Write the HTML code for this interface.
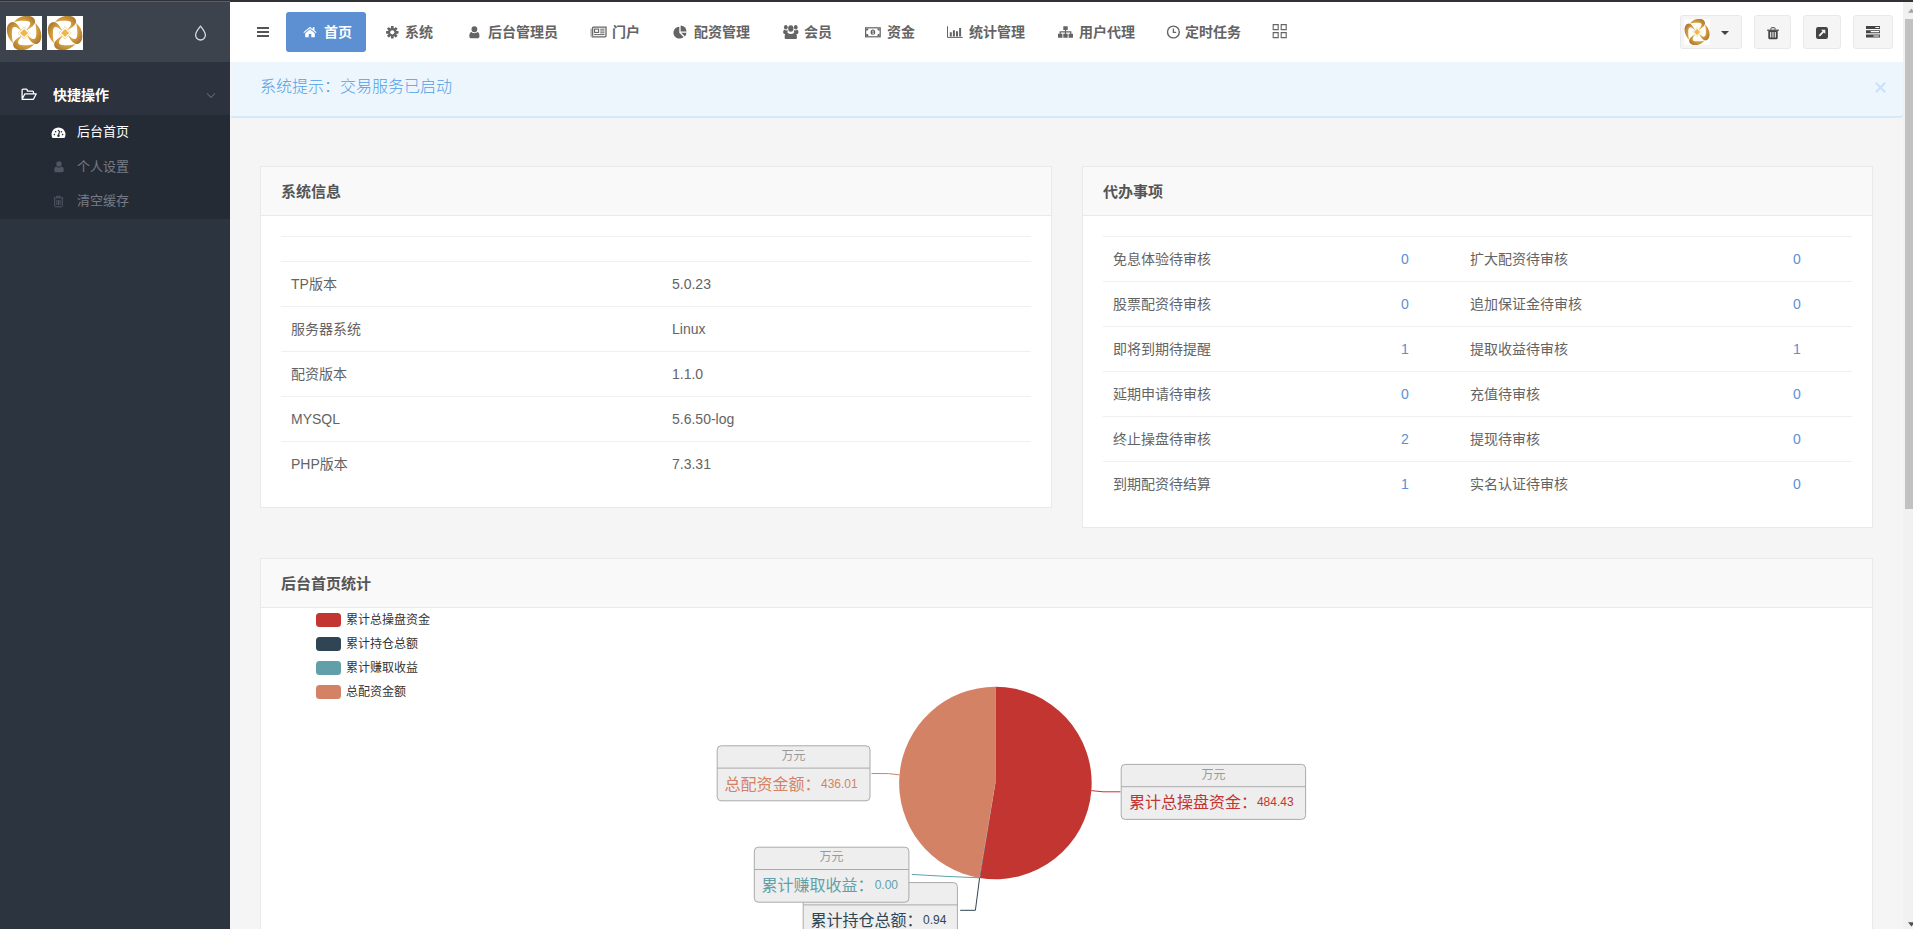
<!DOCTYPE html>
<html lang="zh-CN">
<head>
<meta charset="utf-8">
<title>后台首页</title>
<style>
*{box-sizing:border-box;margin:0;padding:0}
html,body{width:1913px;height:929px;overflow:hidden}
body{position:relative;background:#f5f5f5;font-family:"Liberation Sans","Noto Sans CJK SC",sans-serif;font-size:14px;color:#646464;line-height:20px}
.abs{position:absolute}
.t{position:absolute;white-space:nowrap}
svg{display:block;position:absolute;overflow:visible}
/* top chrome strip */
#topstrip{left:0;top:0;width:1913px;height:2px;background:#303237;z-index:50}
#topstrip2{left:0;top:1px;width:230px;height:1px;background:#5b5e64;z-index:51}
/* sidebar */
#sidebar{left:0;top:0;width:230px;height:929px;background:#2c343f}
#sidehead{left:0;top:0;width:230px;height:62px;background:#3c434d}
#navopen{left:0;top:62px;width:230px;height:53px;background:#2c323e}
#submenu{left:0;top:115px;width:230px;height:104px;background:#252b35}
.logo{width:36px;height:34px;top:16px;background:#fff;overflow:hidden}
.m1{font-size:14px;font-weight:bold;color:#fff}
.s1{font-size:13px;color:#fff}
.s0{font-size:13px;color:#767b85}
/* header */
#header{left:230px;top:0;width:1673px;height:62px;background:#fff}
.nv{font-size:14px;font-weight:bold;color:#646464;top:22px;line-height:20px}
#homebtn{left:286px;top:12px;width:80px;height:40px;background:#5c90d2;border-radius:3px}
.hb{top:15px;height:34px;background:#f5f5f5;border:1px solid #e9e9e9;border-radius:3px}
/* alert */
#alert{left:231px;top:62px;width:1672px;height:54px;background:#edf5fd;border-radius:0 0 3px 0;box-shadow:0 2px 0 #d6e9f8}
#alert .t{left:29px;top:13px;font-size:16px;line-height:24px;color:#4f9fe6;font-weight:300}
/* blocks */
.block{background:#fff;border:1px solid #e9e9e9}
.bh{left:0;top:0;right:0;height:49px;background:#f9f9f9;border-bottom:1px solid #e9e9e9}
.bt{left:20px;top:15px;font-size:15px;line-height:20px;font-weight:bold;color:#555}
.ln{position:absolute;height:1px;background:#f0f0f0}
.c{position:absolute;white-space:nowrap;font-size:14px;line-height:20px;color:#646464}
.a{color:#5c90d2}
/* scrollbar */
#sbtrack{left:1903px;top:2px;width:10px;height:927px;background:#f1f1f1}
#sbthumb{left:1905px;top:19px;width:8px;height:490px;background:#c1c1c1}
</style>
</head>
<body>

<!-- SIDEBAR -->
<div id="sidebar" class="abs"></div>
<div id="sidehead" class="abs"></div>
<div id="navopen" class="abs"></div>
<div id="submenu" class="abs"></div>


<!-- logos -->
<div class="abs logo" style="left:6px"><svg width="36" height="34" viewBox="0 0 36 34"><radialGradient id="gold1" gradientUnits="userSpaceOnUse" cx="-3" cy="-2" r="20"><stop offset="0" stop-color="#f0bd4e"/><stop offset=".5" stop-color="#dba43f"/><stop offset="1" stop-color="#9d6c2c"/></radialGradient><g transform="translate(18.1 17)"><path transform="rotate(0)" d="M-10.200 -11C-6.500 -15 -2 -17.300 2.900 -17.300C7.300 -17.300 11 -15 11 -11.500C11 -8 6.500 -4.800 1.600 -2.600C4.600 -5.500 6.400 -8 6 -10C5.600 -11.800 3.500 -12.100 1 -12.200C-3 -12.300 -7 -11.900 -10.200 -11Z" fill="url(#gold1)"/><path transform="rotate(90)" d="M-10.200 -11C-6.500 -15 -2 -17.300 2.900 -17.300C7.300 -17.300 11 -15 11 -11.500C11 -8 6.500 -4.800 1.600 -2.600C4.600 -5.500 6.400 -8 6 -10C5.600 -11.800 3.500 -12.100 1 -12.200C-3 -12.300 -7 -11.900 -10.200 -11Z" fill="url(#gold1)"/><path transform="rotate(180)" d="M-10.200 -11C-6.500 -15 -2 -17.300 2.900 -17.300C7.300 -17.300 11 -15 11 -11.500C11 -8 6.500 -4.800 1.600 -2.600C4.600 -5.500 6.400 -8 6 -10C5.600 -11.800 3.500 -12.100 1 -12.200C-3 -12.300 -7 -11.900 -10.200 -11Z" fill="url(#gold1)"/><path transform="rotate(270)" d="M-10.200 -11C-6.500 -15 -2 -17.300 2.900 -17.300C7.300 -17.300 11 -15 11 -11.500C11 -8 6.500 -4.800 1.600 -2.600C4.600 -5.500 6.400 -8 6 -10C5.600 -11.800 3.500 -12.100 1 -12.200C-3 -12.300 -7 -11.900 -10.200 -11Z" fill="url(#gold1)"/><rect x="-4.300" y="-4.300" width="8.600" height="8.600" transform="rotate(45)" fill="#fff" stroke="#e2b14c" stroke-width=".7" stroke-dasharray="1 .6"/><rect x="-2.900" y="-2.900" width="5.800" height="5.800" transform="rotate(45)" fill="#ecb84a"/></g></svg></div>
<div class="abs logo" style="left:47px"><svg width="36" height="34" viewBox="0 0 36 34"><radialGradient id="gold2" gradientUnits="userSpaceOnUse" cx="-3" cy="-2" r="20"><stop offset="0" stop-color="#f0bd4e"/><stop offset=".5" stop-color="#dba43f"/><stop offset="1" stop-color="#9d6c2c"/></radialGradient><g transform="translate(18.1 17)"><path transform="rotate(0)" d="M-10.200 -11C-6.500 -15 -2 -17.300 2.900 -17.300C7.300 -17.300 11 -15 11 -11.500C11 -8 6.500 -4.800 1.600 -2.600C4.600 -5.500 6.400 -8 6 -10C5.600 -11.800 3.500 -12.100 1 -12.200C-3 -12.300 -7 -11.900 -10.200 -11Z" fill="url(#gold2)"/><path transform="rotate(90)" d="M-10.200 -11C-6.500 -15 -2 -17.300 2.900 -17.300C7.300 -17.300 11 -15 11 -11.500C11 -8 6.500 -4.800 1.600 -2.600C4.600 -5.500 6.400 -8 6 -10C5.600 -11.800 3.500 -12.100 1 -12.200C-3 -12.300 -7 -11.900 -10.200 -11Z" fill="url(#gold2)"/><path transform="rotate(180)" d="M-10.200 -11C-6.500 -15 -2 -17.300 2.900 -17.300C7.300 -17.300 11 -15 11 -11.500C11 -8 6.500 -4.800 1.600 -2.600C4.600 -5.500 6.400 -8 6 -10C5.600 -11.800 3.500 -12.100 1 -12.200C-3 -12.300 -7 -11.900 -10.200 -11Z" fill="url(#gold2)"/><path transform="rotate(270)" d="M-10.200 -11C-6.500 -15 -2 -17.300 2.900 -17.300C7.300 -17.300 11 -15 11 -11.500C11 -8 6.500 -4.800 1.600 -2.600C4.600 -5.500 6.400 -8 6 -10C5.600 -11.800 3.500 -12.100 1 -12.200C-3 -12.300 -7 -11.900 -10.200 -11Z" fill="url(#gold2)"/><rect x="-4.300" y="-4.300" width="8.600" height="8.600" transform="rotate(45)" fill="#fff" stroke="#e2b14c" stroke-width=".7" stroke-dasharray="1 .6"/><rect x="-2.900" y="-2.900" width="5.800" height="5.800" transform="rotate(45)" fill="#ecb84a"/></g></svg></div>
<!-- drop icon -->
<svg style="left:194px;top:25px" width="13" height="16" viewBox="0 0 13 16"><path d="M6.5 1.2C6.5 1.2 1.6 7.2 1.6 10.1a4.9 4.9 0 0 0 9.8 0C11.4 7.2 6.5 1.2 6.5 1.2z" fill="none" stroke="#d9dbde" stroke-width="1.3"/></svg>
<!-- folder open -->
<svg style="left:21px;top:88px" width="17" height="13" viewBox="0 0 17 13"><path d="M1.1 10.6V2.2a1 1 0 0 1 1-1h3.2a1 1 0 0 1 1 1v.9h5.2a1 1 0 0 1 1 1v1.6M1.1 11.3l2.8-5.5h11.4l-2.9 5.5z" fill="none" stroke="#fff" stroke-width="1.3" stroke-linejoin="round"/></svg>
<span class="t m1" style="left:53px;top:85px">快捷操作</span>
<svg style="left:206px;top:92px" width="10" height="7" viewBox="0 0 10 7"><path d="M1 1.3l4 4 4-4" fill="none" stroke="#5b6270" stroke-width="1.2"/></svg>
<!-- dashboard -->
<svg style="left:51px;top:127px" width="15" height="12" viewBox="0 0 15 12"><path d="M1.5 11A7 7 0 1 1 13.5 11z" fill="#fff"/><path d="M7.5 8.6L8.6 4.2" stroke="#252b35" stroke-width="1.1"/><circle cx="7.5" cy="8.8" r="1.2" fill="#252b35"/><circle cx="3.4" cy="7.6" r=".8" fill="#252b35"/><circle cx="4.6" cy="4.8" r=".8" fill="#252b35"/><circle cx="7.5" cy="3.6" r=".8" fill="#252b35"/><circle cx="10.4" cy="4.8" r=".8" fill="#252b35"/><circle cx="11.6" cy="7.6" r=".8" fill="#252b35"/></svg>
<span class="t s1" style="left:77px;top:122px">后台首页</span>
<!-- user -->
<svg style="left:54px;top:161px" width="10" height="12" viewBox="0 0 10 12"><path d="M5 .3a2.7 2.7 0 0 1 0 5.4a2.7 2.7 0 0 1 0-5.4zM2.3 5.6c.6.7 1.6 1.1 2.7 1.1s2.100-.4 2.700-1.100c1.600.300 2.000 1.900 2.000 3.800c0 1.200-.7 1.900-1.800 1.900H2.100C1 11.300.300 10.600.300 9.400c0-1.900.400-3.500 2.000-3.800z" fill="#505764"/></svg>
<span class="t s0" style="left:77px;top:157px">个人设置</span>
<!-- trash-o -->
<svg style="left:53px;top:195px" width="11" height="13" viewBox="0 0 11 13"><path d="M.6 2.9h9.8M3.6 2.7V1.3h3.8v1.4M1.7 3.2v7.6a1 1 0 0 0 1 1h5.6a1 1 0 0 0 1-1V3.2M3.9 5v5M5.5 5v5M7.1 5v5" fill="none" stroke="#505764" stroke-width="1"/></svg>
<span class="t s0" style="left:77px;top:191px">清空缓存</span>

<!-- HEADER -->
<div id="header" class="abs"></div>
<div id="homebtn" class="abs"></div>


<!-- hamburger -->
<div class="abs" style="left:257px;top:27px;width:12px;height:2px;background:#555;box-shadow:0 4px 0 #555,0 8px 0 #555"></div>
<!-- home -->
<svg style="left:303px;top:26px" width="14" height="12" viewBox="0 0 14 12"><path d="M7 .8L.4 6.300l.700.800L7 2.300l5.900 4.800l.700-.800L11.500 4.500V1.300H9.800v1.800z" fill="#fff"/><path d="M7 3.300L2.200 7.200V11.200H5.700V7.900H8.300V11.200H11.800V7.200z" fill="#fff"/></svg>
<span class="t nv" style="left:324px;color:#fff">首页</span>
<!-- cog -->
<svg style="left:386px;top:25.7px" width="12.6" height="12.6" viewBox="-6.300 -6.300 12.600 12.600"><g fill="#646464"><circle r="4.250"/><rect x="-1.350" y="-6.250" width="2.700" height="12.500" rx=".3"/><rect x="-1.350" y="-6.250" width="2.700" height="12.500" rx=".3" transform="rotate(45)"/><rect x="-1.350" y="-6.250" width="2.700" height="12.500" rx=".3" transform="rotate(90)"/><rect x="-1.350" y="-6.250" width="2.700" height="12.500" rx=".3" transform="rotate(135)"/></g><circle r="2.100" fill="#fff"/></svg>
<span class="t nv" style="left:405px">系统</span>
<!-- user -->
<svg style="left:469px;top:25.500px" width="10.800" height="12.600" viewBox="0 0 10 11.600" preserveAspectRatio="none"><path d="M5 .3a2.7 2.7 0 0 1 0 5.4a2.7 2.7 0 0 1 0-5.4zM2.3 5.6c.6.7 1.6 1.1 2.7 1.1s2.100-.4 2.700-1.100c1.600.300 2.000 1.900 2.000 3.800c0 1.200-.7 1.900-1.800 1.900H2.100C1 11.300.300 10.600.300 9.400c0-1.900.400-3.500 2.000-3.800z" fill="#646464"/></svg>
<span class="t nv" style="left:488px">后台管理员</span>
<!-- newspaper -->
<svg style="left:590px;top:26px" width="17" height="12" viewBox="0 0 17 12"><path d="M.3 2.600h2.600v8.200H1.500A1.200 1.200 0 0 1 .3 9.600z" fill="#b5b5b5"/><path d="M2.700 1.100H16v8.600a1.100 1.100 0 0 1-1.100 1.100H1.700" fill="none" stroke="#646464" stroke-width="1.300"/><path d="M2.700 1.100v8.700" stroke="#646464" stroke-width="1.200"/><rect x="4.600" y="3.100" width="4" height="3.300" fill="none" stroke="#646464" stroke-width="1.100"/><path d="M10.200 3.200h4.300M10.200 5h4.300M10.200 6.800h4.300M4.100 8.600h10.400" stroke="#646464" stroke-width="1"/></svg>
<span class="t nv" style="left:612px">门户</span>
<!-- pie -->
<svg style="left:673px;top:25px" width="15" height="14" viewBox="0 0 15 14"><path d="M6.300 1.800V7.700l4.200 4.200A5.900 5.900 0 1 1 6.300 1.800z" fill="#646464"/><path d="M7.600.6A5.900 5.900 0 0 1 13.500 6.500H7.600z" fill="#646464"/><path d="M8.200 7.800h5.300a5.900 5.900 0 0 1-1.600 3.700z" fill="#646464"/></svg>
<span class="t nv" style="left:694px">配资管理</span>
<!-- users -->
<svg style="left:783px;top:24.800px" width="15.600" height="14.200" viewBox="0 1.300 16 12" preserveAspectRatio="none"><g fill="#646464"><circle cx="8" cy="4.300" r="2.700"/><path d="M3.200 13.200c-.9 0-1.500-.5-1.500-1.400c0-2.200.5-4.100 2.300-4.100c.3 0 1.700 1.200 4 1.200s3.700-1.200 4-1.200c1.800 0 2.300 1.900 2.300 4.100c0 .9-.6 1.400-1.500 1.400z"/><circle cx="2.900" cy="3.300" r="1.900"/><circle cx="13.100" cy="3.300" r="1.900"/><path d="M.2 7.400c0-1 .4-2 1.300-2c.2 0 .9.500 1.600.5c.5 0 1-.1 1.400-.3c0 .8.200 1.500.7 2.100c-1 0-1.800.5-2.300 1.200H1.700C.8 8.900.2 8.400.2 7.400zM15.800 7.400c0-1-.4-2-1.300-2c-.2 0-.9.500-1.600.5c-.5 0-1-.1-1.400-.3c0 .8-.2 1.500-.7 2.100c1 0 1.800.5 2.300 1.200h1.200c.9 0 1.500-.5 1.500-1.500z"/></g></svg>
<span class="t nv" style="left:804px">会员</span>
<!-- money -->
<svg style="left:865px;top:27px" width="16" height="11" viewBox="0 0 16 11"><rect x=".6" y=".8" width="14.600" height="9" fill="none" stroke="#646464" stroke-width="1.200"/><path d="M1.200 1.400h2.400A2.400 2.400 0 0 1 1.200 3.800zM14.600 1.400h-2.400a2.400 2.400 0 0 0 2.400 2.400zM1.200 9.200h2.400A2.400 2.400 0 0 0 1.200 6.800zM14.600 9.200h-2.400a2.400 2.400 0 0 1 2.400-2.400z" fill="#646464"/><ellipse cx="7.900" cy="5.300" rx="2.300" ry="2.700" fill="#646464"/><path d="M7.400 4.200l.700-.500v3.200M7.200 7h1.700" stroke="#fff" stroke-width=".7" fill="none"/></svg>
<span class="t nv" style="left:887px">资金</span>
<!-- bar chart -->
<svg style="left:947px;top:26px" width="16" height="12" viewBox="0 0 16 12"><path d="M.5.300V11.400H15.800" fill="none" stroke="#646464" stroke-width="1"/><path d="M2.800 6.300h2v4.200h-2zM5.900 4.200h2v6.300h-2zM9 5.300h2v5.200H9zM12.100 2.100h2v8.400h-2z" fill="#646464"/></svg>
<span class="t nv" style="left:969px">统计管理</span>
<!-- sitemap -->
<svg style="left:1058px;top:26px" width="15" height="12" viewBox="0 0 15 12"><path d="M5.300.2h4.400v3.700h-4.400zM0 7.800h4.400v3.900H0zM5.300 7.800h4.400v3.900h-4.400zM10.600 7.800h4.400v3.900h-4.400z" fill="#646464"/><path d="M7.500 3.500v4.900M2.200 8.400V5.900h10.600v2.500" fill="none" stroke="#646464" stroke-width="1.200"/></svg>
<span class="t nv" style="left:1079px">用户代理</span>
<!-- clock -->
<svg style="left:1166px;top:25px" width="15" height="14" viewBox="0 0 15 14"><circle cx="7.400" cy="7" r="5.900" fill="none" stroke="#646464" stroke-width="1.400"/><path d="M7.400 3.600V7.400H10.200" fill="none" stroke="#646464" stroke-width="1.300"/></svg>
<span class="t nv" style="left:1185px">定时任务</span>
<!-- grid -->
<svg style="left:1272px;top:24px" width="16" height="15" viewBox="0 0 16 15"><path d="M1.200.6h5v5h-5zM9.200.6h5v5h-5zM1.200 8.600h5v5h-5zM9.200 8.600h5v5h-5z" fill="none" stroke="#646464" stroke-width="1.100"/></svg>

<!-- right buttons -->
<div class="abs hb" style="left:1680px;width:62px"></div>
<div class="abs" style="left:1684px;top:19px;width:26px;height:26px;background:#fff;border-radius:3px;overflow:hidden"><svg width="26" height="26" viewBox="0 0 36 34" preserveAspectRatio="none"><radialGradient id="gold3" gradientUnits="userSpaceOnUse" cx="-3" cy="-2" r="20"><stop offset="0" stop-color="#f0bd4e"/><stop offset=".5" stop-color="#dba43f"/><stop offset="1" stop-color="#9d6c2c"/></radialGradient><g transform="translate(18.1 17)"><path transform="rotate(0)" d="M-10.200 -11C-6.500 -15 -2 -17.300 2.900 -17.300C7.300 -17.300 11 -15 11 -11.500C11 -8 6.500 -4.800 1.600 -2.600C4.600 -5.500 6.400 -8 6 -10C5.600 -11.800 3.500 -12.100 1 -12.200C-3 -12.300 -7 -11.900 -10.200 -11Z" fill="url(#gold3)"/><path transform="rotate(90)" d="M-10.200 -11C-6.500 -15 -2 -17.300 2.900 -17.300C7.300 -17.300 11 -15 11 -11.500C11 -8 6.500 -4.800 1.600 -2.600C4.600 -5.500 6.400 -8 6 -10C5.600 -11.800 3.500 -12.100 1 -12.200C-3 -12.300 -7 -11.900 -10.200 -11Z" fill="url(#gold3)"/><path transform="rotate(180)" d="M-10.200 -11C-6.500 -15 -2 -17.300 2.900 -17.300C7.300 -17.300 11 -15 11 -11.500C11 -8 6.500 -4.800 1.600 -2.600C4.600 -5.500 6.400 -8 6 -10C5.600 -11.800 3.500 -12.100 1 -12.200C-3 -12.300 -7 -11.900 -10.200 -11Z" fill="url(#gold3)"/><path transform="rotate(270)" d="M-10.200 -11C-6.500 -15 -2 -17.300 2.900 -17.300C7.300 -17.300 11 -15 11 -11.500C11 -8 6.500 -4.800 1.600 -2.600C4.600 -5.500 6.400 -8 6 -10C5.600 -11.800 3.500 -12.100 1 -12.200C-3 -12.300 -7 -11.900 -10.200 -11Z" fill="url(#gold3)"/><rect x="-4.300" y="-4.300" width="8.600" height="8.600" transform="rotate(45)" fill="#fff" stroke="#e2b14c" stroke-width=".7" stroke-dasharray="1 .6"/><rect x="-2.900" y="-2.900" width="5.800" height="5.800" transform="rotate(45)" fill="#ecb84a"/></g></svg></div>
<div class="abs" style="left:1721px;top:31px;width:0;height:0;border-left:4px solid transparent;border-right:4px solid transparent;border-top:4px solid #444"></div>
<div class="abs hb" style="left:1754px;width:37px"></div>
<svg style="left:1766.700px;top:26.800px" width="12" height="13" viewBox="0 0 12 13"><path d="M.2 2.600h11.600v1.300H.2z" fill="#444"/><path d="M3.900 2.600V1.500a.8.800 0 0 1 .8-.8h2.600a.8.800 0 0 1 .8.800v1.100" fill="none" stroke="#444" stroke-width="1"/><path d="M1.300 3.900h9.400v7.200a1.100 1.100 0 0 1-1.100 1.100H2.400a1.100 1.100 0 0 1-1.100-1.100z" fill="#444"/><path d="M3.700 5.100v5.400M6 5.100v5.400M8.300 5.100v5.400" stroke="#f5f5f5" stroke-width="1.100"/></svg>
<div class="abs hb" style="left:1803px;width:38px"></div>
<svg style="left:1816px;top:27px" width="12" height="12" viewBox="0 0 12 12"><rect width="12" height="12" rx="2.200" fill="#444"/><path d="M2.600 8.200L6.500 4.300L5 2.800h4.300v4.300L7.800 5.600L3.900 9.500z" fill="#f5f5f5"/></svg>
<div class="abs hb" style="left:1853px;width:40px"></div>
<svg style="left:1866px;top:26px" width="14" height="12" viewBox="0 0 14 12"><path d="M0 0h14v3H0zM0 4.200h14v3H0zM0 8.400h14v3H0z" fill="#444"/><path d="M9.400 .9h3.800v1.200H9.400zM4.700 5.100h8.500v1.200H4.700zM7.400 9.400h5.800v1.200H7.400z" fill="#fff"/></svg>
<!-- alert close -->
<svg style="left:1875px;top:82px;z-index:3" width="11" height="11" viewBox="0 0 11 11"><path d="M.8 .8l9.400 9.400M10.200 .8l-9.400 9.400" stroke="#cbe2f6" stroke-width="2.100"/></svg>

<!-- ALERT -->
<div id="alert" class="abs"><span class="t">系统提示：交易服务已启动</span></div>

<!-- BLOCKS -->
<div id="b1" class="abs block" style="left:260px;top:166px;width:792px;height:342px"><div class="abs bh"></div><span class="t bt">系统信息</span><div class="ln" style="left:20px;top:69px;width:750px"></div><div class="ln" style="left:20px;top:94px;width:750px"></div><div class="ln" style="left:20px;top:139px;width:750px"></div><div class="ln" style="left:20px;top:184px;width:750px"></div><div class="ln" style="left:20px;top:229px;width:750px"></div><div class="ln" style="left:20px;top:274px;width:750px"></div><span class="c" style="left:30px;top:107px">TP版本</span><span class="c" style="left:411px;top:107px">5.0.23</span><span class="c" style="left:30px;top:152px">服务器系统</span><span class="c" style="left:411px;top:152px">Linux</span><span class="c" style="left:30px;top:197px">配资版本</span><span class="c" style="left:411px;top:197px">1.1.0</span><span class="c" style="left:30px;top:242px">MYSQL</span><span class="c" style="left:411px;top:242px">5.6.50-log</span><span class="c" style="left:30px;top:287px">PHP版本</span><span class="c" style="left:411px;top:287px">7.3.31</span></div>
<div id="b2" class="abs block" style="left:1082px;top:166px;width:791px;height:362px"><div class="abs bh"></div><span class="t bt">代办事项</span><div class="ln" style="left:20px;top:69px;width:749px"></div><div class="ln" style="left:20px;top:114px;width:749px"></div><div class="ln" style="left:20px;top:159px;width:749px"></div><div class="ln" style="left:20px;top:204px;width:749px"></div><div class="ln" style="left:20px;top:249px;width:749px"></div><div class="ln" style="left:20px;top:294px;width:749px"></div><span class="c" style="left:30px;top:82px">免息体验待审核</span><span class="c a" style="left:318px;top:82px">0</span><span class="c" style="left:387px;top:82px">扩大配资待审核</span><span class="c a" style="left:710px;top:82px">0</span><span class="c" style="left:30px;top:127px">股票配资待审核</span><span class="c a" style="left:318px;top:127px">0</span><span class="c" style="left:387px;top:127px">追加保证金待审核</span><span class="c a" style="left:710px;top:127px">0</span><span class="c" style="left:30px;top:172px">即将到期待提醒</span><span class="c a" style="left:318px;top:172px">1</span><span class="c" style="left:387px;top:172px">提取收益待审核</span><span class="c a" style="left:710px;top:172px">1</span><span class="c" style="left:30px;top:217px">延期申请待审核</span><span class="c a" style="left:318px;top:217px">0</span><span class="c" style="left:387px;top:217px">充值待审核</span><span class="c a" style="left:710px;top:217px">0</span><span class="c" style="left:30px;top:262px">终止操盘待审核</span><span class="c a" style="left:318px;top:262px">2</span><span class="c" style="left:387px;top:262px">提现待审核</span><span class="c a" style="left:710px;top:262px">0</span><span class="c" style="left:30px;top:307px">到期配资待结算</span><span class="c a" style="left:318px;top:307px">1</span><span class="c" style="left:387px;top:307px">实名认证待审核</span><span class="c a" style="left:710px;top:307px">0</span></div>
<div id="b3" class="abs block" style="left:260px;top:558px;width:1613px;height:420px"><div class="abs bh"></div><span class="t bt">后台首页统计</span></div>

<!-- CHART -->
<svg id="chart" style="left:261px;top:608px" width="1611" height="321" viewBox="0 0 1611 321" font-family="Liberation Sans, Noto Sans CJK SC, sans-serif">
<rect x="55" y="5" width="25" height="14" rx="3.5" fill="#c23531"/><text x="85" y="16.3" font-size="12" fill="#333">累计总操盘资金</text>
<rect x="55" y="29" width="25" height="14" rx="3.5" fill="#2f4554"/><text x="85" y="40.3" font-size="12" fill="#333">累计持仓总额</text>
<rect x="55" y="53" width="25" height="14" rx="3.5" fill="#61a0a8"/><text x="85" y="64.3" font-size="12" fill="#333">累计赚取收益</text>
<rect x="55" y="77" width="25" height="14" rx="3.5" fill="#d48265"/><text x="85" y="88.3" font-size="12" fill="#333">总配资金额</text>
<path d="M734.40 175.00L734.40 78.75A96.25 96.25 0 1 1 718.89 269.99Z" fill="#c23531"/>
<path d="M734.40 175.00L718.89 269.99A96.25 96.25 0 0 1 718.28 269.89Z" fill="#2f4554"/>
<path d="M734.40 175.00L718.28 269.89A96.25 96.25 0 0 1 734.40 78.75Z" fill="#d48265"/>
<path d="M830.3 182.6L842.0 183.8L859.5 183.8" fill="none" stroke="#c23531" stroke-width="1"/>
<path d="M638.5 166.9L627.6 165.6L610.5 165.5" fill="none" stroke="#d48265" stroke-width="1"/>
<path d="M718.5 269.8Q684.0 268.6 650.8 266.4" fill="none" stroke="#61a0a8" stroke-width="1"/>
<path d="M718.6 269.9L714.4 302.3L699.2 302.3" fill="none" stroke="#2f4554" stroke-width="1"/>
<g><rect x="860.20" y="156.40" width="184.40" height="55" rx="4" fill="#eee" stroke="#aaa" stroke-width="1"/><path d="M860.20 178.70h184.40" stroke="#aaa" stroke-width="1"/><text x="952.40" y="170.60" font-size="12" fill="#999" text-anchor="middle">万元</text><text x="868.00" y="200.10" font-size="16" fill="#c23531">累计总操盘资金：</text><text x="995.90" y="198.20" font-size="12" fill="#c23531">484.43</text></g>
<g><rect x="542.20" y="274.60" width="154.20" height="55" rx="4" fill="#eee" stroke="#aaa" stroke-width="1"/><path d="M542.20 296.90h154.20" stroke="#aaa" stroke-width="1"/><text x="619.30" y="288.80" font-size="12" fill="#999" text-anchor="middle">万元</text><text x="549.60" y="318.30" font-size="16" fill="#2f4554">累计持仓总额：</text><text x="662.00" y="316.40" font-size="12" fill="#2f4554">0.94</text></g>
<g><rect x="493.30" y="239.20" width="154.60" height="55" rx="4" fill="#eee" stroke="#aaa" stroke-width="1"/><path d="M493.30 261.50h154.60" stroke="#aaa" stroke-width="1"/><text x="570.60" y="253.40" font-size="12" fill="#999" text-anchor="middle">万元</text><text x="500.60" y="282.90" font-size="16" fill="#61a0a8">累计赚取收益：</text><text x="613.70" y="281.00" font-size="12" fill="#61a0a8">0.00</text></g>
<g><rect x="456.20" y="137.80" width="152.80" height="55" rx="4" fill="#eee" stroke="#aaa" stroke-width="1"/><path d="M456.20 160.10h152.80" stroke="#aaa" stroke-width="1"/><text x="532.60" y="152.00" font-size="12" fill="#999" text-anchor="middle">万元</text><text x="463.40" y="181.50" font-size="16" fill="#d48265">总配资金额：</text><text x="560.00" y="179.60" font-size="12" fill="#d48265">436.01</text></g>
</svg>

<!-- SCROLLBAR -->
<div id="sbtrack" class="abs"></div>
<div id="sbthumb" class="abs"></div>
<div id="topstrip" class="abs"></div><div id="topstrip2" class="abs"></div>
<svg style="left:1903px;top:2px;z-index:40" width="10" height="927" viewBox="0 0 10 927"><path d="M5 10.800L8.500 6.600L12 10.800z" fill="#a3a3a3"/><path d="M5 920.200L8.500 924.400L12 920.200z" fill="#505050"/></svg>
</body>
</html>
